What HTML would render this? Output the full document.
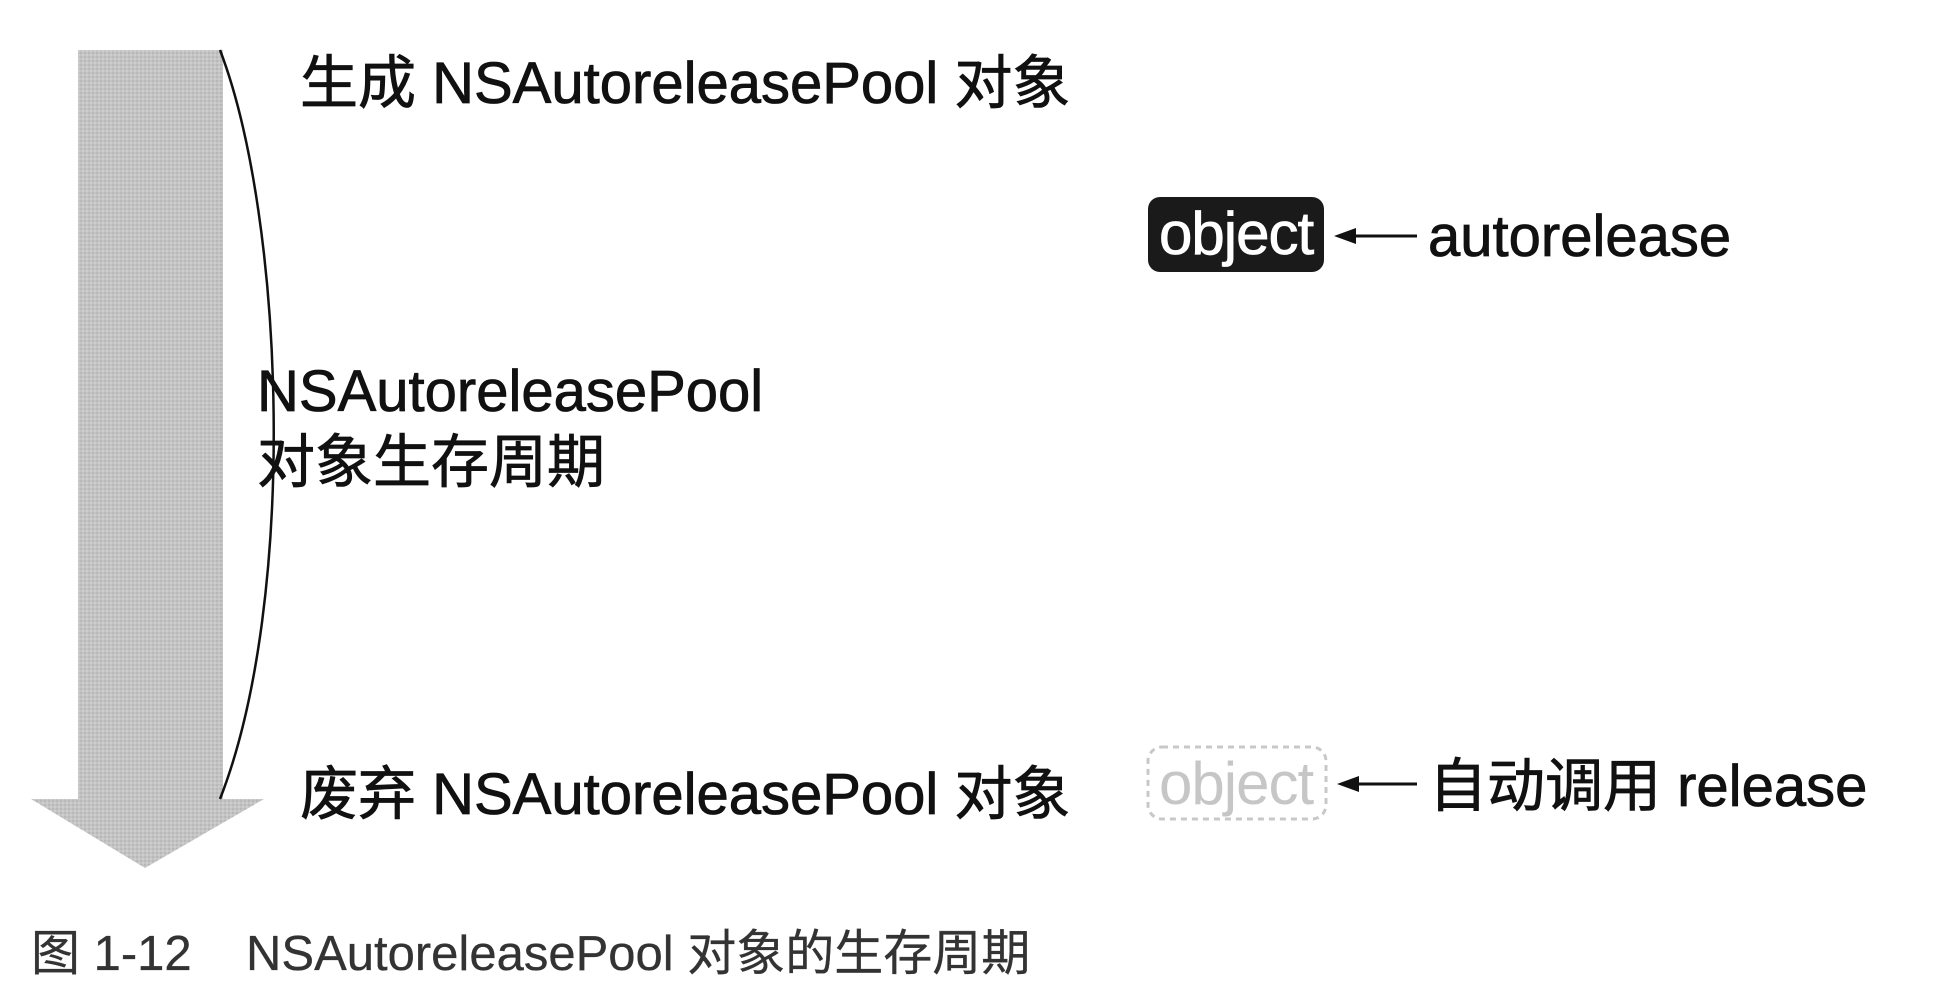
<!DOCTYPE html>
<html><head><meta charset="utf-8"><style>
html,body{margin:0;padding:0;background:#fff;}
body{width:1950px;height:992px;position:relative;overflow:hidden;font-family:"Liberation Sans","Noto Sans CJK SC",sans-serif;color:#111;}
.t{position:absolute;white-space:nowrap;font-size:58px;line-height:70px;-webkit-text-stroke:0.8px currentColor;}
</style></head><body>
<svg width="1950" height="992" style="position:absolute;left:0;top:0">
<defs>
<pattern id="n" width="4" height="4" patternUnits="userSpaceOnUse">
<rect width="4" height="4" fill="#c4c4c4"/><rect width="2" height="2" fill="#b8b8b8"/><rect x="2" y="2" width="2" height="2" fill="#cdcdcd"/>
</pattern>
</defs>
<polygon points="78,50 223,50 223,799 264,799 145,868 31,799 78,799" fill="url(#n)"/>
<path d="M220,50 C285,220 298,600 220,799" fill="none" stroke="#111" stroke-width="2.5"/>
<rect x="1148" y="197" width="176" height="75" rx="12" fill="#1a1a1a"/>
<rect x="1148" y="747" width="178" height="72" rx="14" fill="none" stroke="#c8c8c8" stroke-width="3" stroke-dasharray="6,5"/>
<line x1="1353" y1="236" x2="1417" y2="236" stroke="#111" stroke-width="3"/>
<polygon points="1334,236 1356,228 1356,244" fill="#111"/>
<line x1="1355" y1="784" x2="1417" y2="784" stroke="#111" stroke-width="3"/>
<polygon points="1337,784 1359,776 1359,792" fill="#111"/>
</svg>
<div class="t" style="left:300px;top:49px;">生成 NSAutoreleasePool 对象</div>
<div class="t" style="left:1159px;top:199px;color:#fff;font-size:60px;letter-spacing:-1px;">object</div>
<div class="t" style="left:1428px;top:202px;">autorelease</div>
<div class="t" style="left:257px;top:357px;">NSAutoreleasePool</div>
<div class="t" style="left:257px;top:428px;">对象生存周期</div>
<div class="t" style="left:300px;top:760px;">废弃 NSAutoreleasePool 对象</div>
<div class="t" style="left:1159px;top:749px;color:#c6c6c6;font-size:60px;letter-spacing:-1px;-webkit-text-stroke:0;">object</div>
<div class="t" style="left:1429px;top:752px;">自动调用 release</div>
<div class="t" style="left:31px;top:924px;font-size:49px;line-height:60px;color:#333;-webkit-text-stroke:0.3px #333;">图 1-12</div>
<div class="t" style="left:246px;top:924px;font-size:49px;line-height:60px;color:#333;-webkit-text-stroke:0.3px #333;">NSAutoreleasePool 对象的生存周期</div>
</body></html>
